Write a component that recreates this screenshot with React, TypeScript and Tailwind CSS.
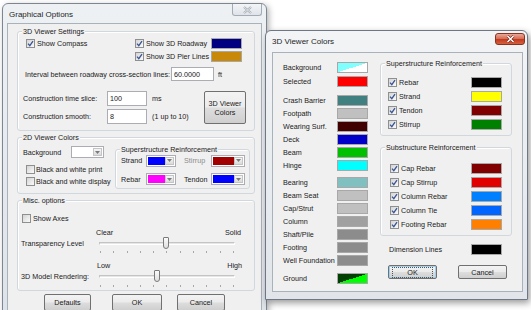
import React from "react";

const Check = ({ checked = false }: { checked?: boolean }) => (
  <span className="inline-flex items-center justify-center w-[9px] h-[9px] shrink-0 border border-[#8e8f8f] bg-[linear-gradient(135deg,#d4d4d4,#fafafa)]">
    {checked && (
      <svg width="7" height="7" viewBox="0 0 7 7">
        <path d="M1 3.6 L2.8 5.6 L6 1.1" stroke="#3a5496" strokeWidth="1.3" fill="none" />
      </svg>
    )}
  </span>
);

const Swatch = ({ className }: { className: string }) => (
  <span className={`block shrink-0 w-[31px] h-[11px] border border-[#a8a8a8] ${className}`} />
);

const Combo = ({ w, color }: { w: string; color: string }) => (
  <span className={`flex shrink-0 h-[12px] ${w} border border-[#abadb3] bg-white p-[1px]`}>
    <span className={`flex-1 ${color}`} />
    <span className="w-[9px] flex items-center justify-center bg-[linear-gradient(#f6f6f6,#dadada)] border border-[#c4c4c4]">
      <svg width="5" height="3" viewBox="0 0 5 3">
        <path d="M0 0 L5 0 L2.5 3 Z" fill="#7a7a7a" />
      </svg>
    </span>
  </span>
);

const Input = ({ w, h, children }: { w: string; h: string; children: React.ReactNode }) => (
  <span className={`flex shrink-0 items-center ${w} ${h} border border-[#abadb3] bg-white pl-[2px]`}>{children}</span>
);

const Btn = ({ className, children }: { className: string; children: React.ReactNode }) => (
  <span
    className={`flex shrink-0 items-center justify-center border border-[#707070] rounded-[2px] bg-[linear-gradient(#f3f3f3_0%,#ebebeb_48%,#dddddd_52%,#cfcfcf_100%)] ${className}`}
  >
    {children}
  </span>
);

const Group = ({ title, className, children }: { title: string; className: string; children: React.ReactNode }) => (
  <div className={`relative border border-[#d0d8de] rounded-[3px] shadow-[inset_1px_1px_0_#ffffff] ${className}`}>
    <span className="absolute left-[4px] top-[-5px] px-[1px] bg-[#f0f0f0] leading-[9px] whitespace-nowrap">{title}</span>
    {children}
  </div>
);

const Slider = ({ thumb }: { thumb: string }) => (
  <div className="relative w-[136px] h-[13px]">
    <div className="absolute left-0 right-0 top-[5px] h-[3px] border border-[#c4c4c4] border-b-[#ffffff] border-r-[#ffffff] bg-[#e6e6e6]" />
    <div className={`absolute top-0 w-[6px] h-[12px] rounded-b-[3px] rounded-t-[1px] border border-[#7a7a7a] bg-[linear-gradient(#fbfbfb,#dedede)] ${thumb}`} />
  </div>
);

const Ticks = ({ className }: { className: string }) => (
  <div className={`flex justify-between w-[134px] h-[2px] ${className}`}>
    {Array.from({ length: 11 }).map((_, i) => (
      <span key={i} className="block w-[1px] h-[2px] bg-[#a8a8a8]" />
    ))}
  </div>
);

const leftRows = [
  { label: "Background", sw: "bg-[linear-gradient(to_bottom_right,#80ffff_50%,#ffffff_50%)]", mt: "mt-[8px]" },
  { label: "Selected", sw: "bg-[#ff0000]", mt: "mt-[1px]" },
  { label: "Crash Barrier", sw: "bg-[#408080]", mt: "mt-[6px]" },
  { label: "Footpath", sw: "bg-[#c0c0c0]", mt: "" },
  { label: "Wearing Surf.", sw: "bg-[#400000]", mt: "" },
  { label: "Deck", sw: "bg-[#0000c8]", mt: "" },
  { label: "Beam", sw: "bg-[#00c000]", mt: "" },
  { label: "Hinge", sw: "bg-[#00ffff]", mt: "" },
  { label: "Bearing", sw: "bg-[#80c0c0]", mt: "mt-[4px]" },
  { label: "Beam Seat", sw: "bg-[#c0c0c0]", mt: "" },
  { label: "Cap/Strut", sw: "bg-[#c0c0c0]", mt: "" },
  { label: "Column", sw: "bg-[#a0a0a0]", mt: "" },
  { label: "Shaft/Pile", sw: "bg-[#8c8c8c]", mt: "" },
  { label: "Footing", sw: "bg-[#8c8c8c]", mt: "" },
  { label: "Well Foundation", sw: "bg-[#8c8c8c]", mt: "" },
  { label: "Ground", sw: "bg-[linear-gradient(to_bottom_right,#004000_50%,#00ff00_50%)]", mt: "mt-[5px]" },
];

const superRows = [
  { label: "Rebar", sw: "bg-[#000000]" },
  { label: "Strand", sw: "bg-[#ffff00]" },
  { label: "Tendon", sw: "bg-[#800000]" },
  { label: "Stirrup", sw: "bg-[#008000]" },
];

const subRows = [
  { label: "Cap Rebar", sw: "bg-[#800000]" },
  { label: "Cap Stirrup", sw: "bg-[#e00000]" },
  { label: "Column Rebar", sw: "bg-[#0080ff]" },
  { label: "Column Tie", sw: "bg-[#0064ff]" },
  { label: "Footing Rebar", sw: "bg-[#ff8000]" },
];

export default function App() {
  return (
    <div className="relative w-[531px] h-[310px] overflow-hidden bg-white font-['Liberation_Sans',Arial,sans-serif] text-[7.2px] leading-[9px] text-[#1a1a1a]">
      {/* Graphical Options window */}
      <div className="absolute left-[2px] top-[3px] w-[265px] h-[330px] flex flex-col rounded-t-[6px] border border-[#7d8792] bg-[linear-gradient(#eef1f4,#dde2e8)] shadow-[2px_2px_6px_rgba(0,0,0,0.3)]">
        <div className="h-[19px] flex items-start shrink-0">
          <span className="pl-[6px] pt-[6px] text-[8px] leading-[9px] text-[#1e1e1e]">Graphical Options</span>
          <span className="ml-auto mr-[4px] w-[30px] h-[12px] rounded-b-[3px] border border-t-0 border-[#a3acb6] bg-[linear-gradient(#f3f5f7,#dfe4e9)] flex items-center justify-center">
            <svg width="9" height="8" viewBox="0 0 9 8">
              <path d="M1 1 L8 7 M8 1 L1 7" stroke="#a4abb3" strokeWidth="2.2" />
              <path d="M1 1 L8 7 M8 1 L1 7" stroke="#eef0f2" strokeWidth="0.8" />
            </svg>
          </span>
        </div>
        <div className="mx-[4px] flex-1 border border-[#a9b1ba] bg-[#f0f0f0] flex flex-col">
          {/* 3D Viewer Settings */}
          <Group title="3D Viewer Settings" className="ml-[9px] mt-[7px] w-[238px] pt-[5px] pb-[6px] flex flex-col">
            <div className="flex h-[13px] items-center">
              <div className="w-[117px] pl-[8px] flex items-center gap-[2px]">
                <Check checked />
                <span>Show Compass</span>
              </div>
              <div className="w-[76px] flex items-center gap-[2px]">
                <Check checked />
                <span className="whitespace-nowrap">Show 3D Roadway</span>
              </div>
              <Swatch className="bg-[#000080]" />
            </div>
            <div className="flex h-[13px] items-center">
              <div className="w-[117px]" />
              <div className="w-[76px] flex items-center gap-[2px]">
                <Check checked />
                <span className="whitespace-nowrap">Show 3D Pier Lines</span>
              </div>
              <Swatch className="bg-[#c8880a]" />
            </div>
            <div className="flex h-[14px] items-center mt-[4px]">
              <span className="w-[153px] pl-[7px] whitespace-nowrap">Interval between roadway cross-section lines:</span>
              <Input w="w-[43px]" h="h-[14px]">60.0000</Input>
              <span className="ml-[4px]">ft</span>
            </div>
            <div className="flex mt-[10px]">
              <div className="w-[186px] flex flex-col gap-[3px]">
                <div className="flex h-[15px] items-center">
                  <span className="w-[89px] pl-[5px] whitespace-nowrap">Construction time slice:</span>
                  <Input w="w-[40px]" h="h-[15px]">100</Input>
                  <span className="ml-[5px]">ms</span>
                </div>
                <div className="flex h-[15px] items-center">
                  <span className="w-[89px] pl-[5px] whitespace-nowrap">Construction smooth:</span>
                  <Input w="w-[40px]" h="h-[15px]">8</Input>
                  <span className="ml-[5px]">(1 up to 10)</span>
                </div>
              </div>
              <Btn className="w-[42px] h-[33px] flex-col">
                <span>3D Viewer</span>
                <span>Colors</span>
              </Btn>
            </div>
          </Group>

          {/* 2D Viewer Colors */}
          <Group title="2D Viewer Colors" className="ml-[9px] mt-[6px] w-[238px] pb-[4px] flex">
            <div className="w-[97px] flex flex-col">
              <div className="flex h-[12px] items-center mt-[8px]">
                <span className="w-[53px] pl-[5px]">Background</span>
                <Combo w="w-[33px]" color="bg-white" />
              </div>
              <div className="flex h-[12px] items-center mt-[5px] pl-[8px] gap-[1px]">
                <Check />
                <span className="whitespace-nowrap">Black and white print</span>
              </div>
              <div className="flex h-[12px] items-center pl-[8px] gap-[1px]">
                <Check />
                <span className="whitespace-nowrap">Black and white display</span>
              </div>
            </div>
            <Group title="Superstructure Reinforcement" className="w-[135px] h-[40px] mt-[11px] pt-[5px] flex flex-col">
              <div className="flex h-[11px] items-center">
                <span className="w-[30px] pl-[5px]">Strand</span>
                <Combo w="w-[30px]" color="bg-[#0000ff]" />
                <span className="w-[35px] pl-[8px] text-[#8c8c8c]">Stirrup</span>
                <Combo w="w-[34px]" color="bg-[#a00000]" />
              </div>
              <div className="flex h-[12px] items-center mt-[7px]">
                <span className="w-[30px] pl-[5px]">Rebar</span>
                <Combo w="w-[30px]" color="bg-[#ff00ff]" />
                <span className="w-[35px] pl-[8px]">Tendon</span>
                <Combo w="w-[34px]" color="bg-[#0000ff]" />
              </div>
            </Group>
          </Group>

          {/* Misc. options */}
          <Group title="Misc. options" className="ml-[9px] mt-[6px] w-[238px] pb-[3px] flex flex-col">
            <div className="flex h-[10px] items-center mt-[12px] pl-[4px] gap-[2px]">
              <Check />
              <span>Show Axes</span>
            </div>
            <div className="flex h-[10px] items-center justify-between mt-[4px] ml-[78px] w-[145px]">
              <span>Clear</span>
              <span>Solid</span>
            </div>
            <div className="flex h-[13px] items-center">
              <span className="w-[81px] pl-[3px] whitespace-nowrap">Transparency Level</span>
              <Slider thumb="left-[64px]" />
            </div>
            <Ticks className="ml-[82px] mt-[1px]" />
            <div className="flex h-[10px] items-center justify-between mt-[7px] ml-[79px] w-[145px]">
              <span>Low</span>
              <span>High</span>
            </div>
            <div className="flex h-[13px] items-center">
              <span className="w-[81px] pl-[3px] whitespace-nowrap">3D Model Rendering:</span>
              <Slider thumb="left-[55px]" />
            </div>
            <Ticks className="ml-[82px] mt-[2px]" />
          </Group>

          <div className="flex mt-[3px]">
            <Btn className="ml-[36px] w-[47px] h-[17px]">Defaults</Btn>
            <Btn className="ml-[21px] w-[50px] h-[17px]">OK</Btn>
            <Btn className="ml-[15px] w-[48px] h-[17px]">Cancel</Btn>
          </div>
        </div>
      </div>

      {/* 3D Viewer Colors window */}
      <div className="absolute left-[265px] top-[30px] w-[263px] h-[270px] flex flex-col rounded-t-[6px] border border-[#6d7884] bg-[linear-gradient(#f2f4f6,#e1e5ea)] shadow-[2px_3px_7px_rgba(0,0,0,0.4)]">
        <div className="h-[21px] flex items-start shrink-0">
          <span className="pl-[6px] pt-[6px] text-[8px] leading-[9px] text-[#1e1e1e]">3D Viewer Colors</span>
          <span className="ml-auto mr-[2px] mt-[2px] w-[30px] h-[12px] rounded-[3px] border border-[#8a3322] bg-[linear-gradient(#e9a898_0%,#d6705a_45%,#c43c1f_55%,#d5603f_100%)] flex items-center justify-center">
            <svg width="9" height="8" viewBox="0 0 9 8">
              <path d="M1.5 1 L7.5 7 M7.5 1 L1.5 7" stroke="#6e2416" strokeWidth="2.6" />
              <path d="M1.5 1 L7.5 7 M7.5 1 L1.5 7" stroke="#ffffff" strokeWidth="1.5" />
            </svg>
          </span>
        </div>
        <div className="ml-[6px] mr-[4px] mb-[7px] flex-1 border border-[#a9b1ba] bg-[#f0f0f0] flex">
          <div className="w-[107px] flex flex-col">
            {leftRows.map((r) => (
              <div key={r.label} className={`flex h-[13px] items-center ${r.mt}`}>
                <span className="w-[64px] pl-[10px] whitespace-nowrap">{r.label}</span>
                <Swatch className={r.sw} />
              </div>
            ))}
          </div>
          <div className="w-[132px] flex flex-col">
            <Group title="Superstructure Reinforcement" className="mt-[10px] pt-[11px] pb-[4px] flex flex-col">
              {superRows.map((r) => (
                <div key={r.label} className="flex h-[14px] items-center pl-[7px]">
                  <Check checked />
                  <span className="ml-[2px]">{r.label}</span>
                  <span className="ml-auto mr-[9px]">
                    <Swatch className={r.sw} />
                  </span>
                </div>
              ))}
            </Group>
            <Group title="Substructure Reinforcement" className="mt-[11px] pt-[13px] pb-[4px] flex flex-col">
              {subRows.map((r) => (
                <div key={r.label} className="flex h-[14px] items-center pl-[9px]">
                  <Check checked />
                  <span className="ml-[2px]">{r.label}</span>
                  <span className="ml-auto mr-[9px]">
                    <Swatch className={r.sw} />
                  </span>
                </div>
              ))}
            </Group>
            <div className="flex h-[13px] items-center mt-[7px] pl-[9px]">
              <span>Dimension Lines</span>
              <span className="ml-auto mr-[10px]">
                <Swatch className="bg-[#000000]" />
              </span>
            </div>
            <div className="flex mt-[9px] pl-[8px]">
              <Btn className="w-[49px] h-[14px] border-[#3c7fb1] shadow-[inset_0_0_0_1px_#9fd0ef]">
                <span className="px-[14px] border border-dotted border-[#555]">OK</span>
              </Btn>
              <Btn className="ml-[21px] w-[49px] h-[14px]">Cancel</Btn>
            </div>
          </div>
        </div>
      </div>
    </div>
  );
}
